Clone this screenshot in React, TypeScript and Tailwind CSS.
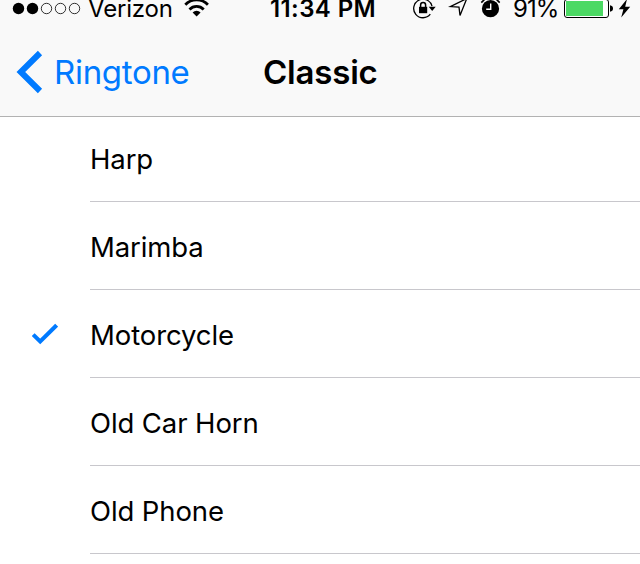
const tones = ['Harp', 'Marimba', 'Motorcycle', 'Old Car Horn', 'Old Phone'];

function StatusBar() {
  return (
    <div className="flex h-7 items-start overflow-hidden text-[24px] leading-[17px] text-black">
      <svg className="ml-3 h-[18px] w-[70px] shrink-0" viewBox="12 0 70 18">
        <circle cx="18.5" cy="8.5" r="5.7" />
        <circle cx="32.5" cy="8.5" r="5.7" />
        <circle cx="46.5" cy="8.5" r="5.2" fill="none" stroke="#000" strokeWidth=".8" />
        <circle cx="60.5" cy="8.5" r="5.2" fill="none" stroke="#000" strokeWidth=".8" />
        <circle cx="74.5" cy="8.5" r="5.2" fill="none" stroke="#000" strokeWidth=".8" />
      </svg>
      <span className="ml-[6px] w-[96px] shrink-0 whitespace-nowrap tracking-[-0.2px]">Verizon</span>
      <svg className="h-[18px] w-[26px] shrink-0" viewBox="184 0 26 18">
        <g fill="none" stroke="#000" strokeWidth="2.8">
          <path d="M185.3 4.7a15.8 15.8 0 0 1 22.6 0" />
          <path d="M189.5 9.4a10 10 0 0 1 14.2 0" />
        </g>
        <path d="M192.6 12.4a5.8 5.8 0 0 1 8 0l-4 4.2z" />
      </svg>
      <span className="ml-[60px] w-[143px] shrink-0 whitespace-nowrap font-semibold tracking-[0.4px]">11:34 PM</span>
      <svg className="h-[19px] w-[24px] shrink-0" viewBox="413 0 24 19">
        <path d="M430.3 14.2A9.3 9.3 0 1 1 432 6.2" fill="none" stroke="#000" strokeWidth="1.3" />
        <path d="M428.7 6.8h7l-3.5 4.2z" />
        <path d="M419 6.8h8.2v6.4H419z" />
        <path d="M420.6 7V5a2.5 2.5 0 0 1 5 0v2" fill="none" stroke="#000" strokeWidth="1.5" />
      </svg>
      <svg className="ml-[11px] h-[19px] w-[22px] shrink-0" viewBox="448 0 22 19">
        <path d="M466.8-1.5L450.3 6.6l8.7.6 1 8.2z" fill="none" stroke="#000" strokeWidth="1.3" />
      </svg>
      <svg className="ml-[10px] h-[19px] w-[22px] shrink-0" viewBox="480 0 22 19">
        <circle cx="490.5" cy="8.7" r="8.6" />
        <path d="M490.7 3.5v5.7h-4.5" fill="none" stroke="#fff" strokeWidth="1.4" />
        <path d="M481.3 2.6l3-3M499.7 2.6l-3-3" stroke="#000" strokeWidth="1.6" />
      </svg>
      <span className="ml-[11px] w-[51px] shrink-0 whitespace-nowrap tracking-[-0.9px]">91%</span>
      <svg className="h-[19px] w-[50px] shrink-0" viewBox="564 0 50 19">
        <rect x="564.5" y="-.5" width="44" height="18" rx="2.5" fill="#fff" stroke="#000" />
        <rect x="566" y="1" width="37" height="15" fill="#4cd964" />
        <path d="M610 5.2q3 .6 3 3.3t-3 3.3z" />
      </svg>
      <svg className="ml-[4px] h-[19px] w-[14px] shrink-0" viewBox="618 0 14 19">
        <path d="M627-1l-8.2 10.2h4.6l-2.2 8.2 9-10.6h-5z" />
      </svg>
    </div>
  );
}

export default function App() {
  return (
    <div className="h-[564px] w-[640px] overflow-hidden bg-white font-['Inter',sans-serif] text-black">
      <header className="h-[117px] border-b border-[#b2b2b2] bg-[#f9f9f9]">
        <StatusBar />
        <div className="flex h-[88px] items-center">
          <svg className="ml-4 h-[44px] w-[27px] shrink-0" viewBox="16 50 27 44">
            <path d="M40 53L20.8 72 40 91" fill="none" stroke="#007aff" strokeWidth="6" />
          </svg>
          <span className="ml-[11px] w-[209px] whitespace-nowrap text-[33px] leading-10 tracking-[-0.3px] text-[#007aff]">
            Ringtone
          </span>
          <h1 className="whitespace-nowrap text-[33px] font-semibold leading-10 tracking-[-0.2px]">Classic</h1>
        </div>
      </header>
      <ul>
        {tones.map((tone) => (
          <li key={tone} className="flex h-[88px] items-end first:h-[85px]">
            <div className="flex h-full w-[90px] items-center pl-8">
              {tone === 'Motorcycle' && (
                <svg className="h-[22px] w-[26px]" viewBox="32 323 26 22">
                  <path d="M33.2 334.6l7 6.9 16.4-16.3" fill="none" stroke="#007aff" strokeWidth="4" />
                </svg>
              )}
            </div>
            <div className="flex-1 border-b border-[#c8c7cc] pb-[25px]">
              <span className="block whitespace-nowrap text-[27.5px] leading-[34px] tracking-[-0.1px]">{tone}</span>
            </div>
          </li>
        ))}
      </ul>
    </div>
  );
}
